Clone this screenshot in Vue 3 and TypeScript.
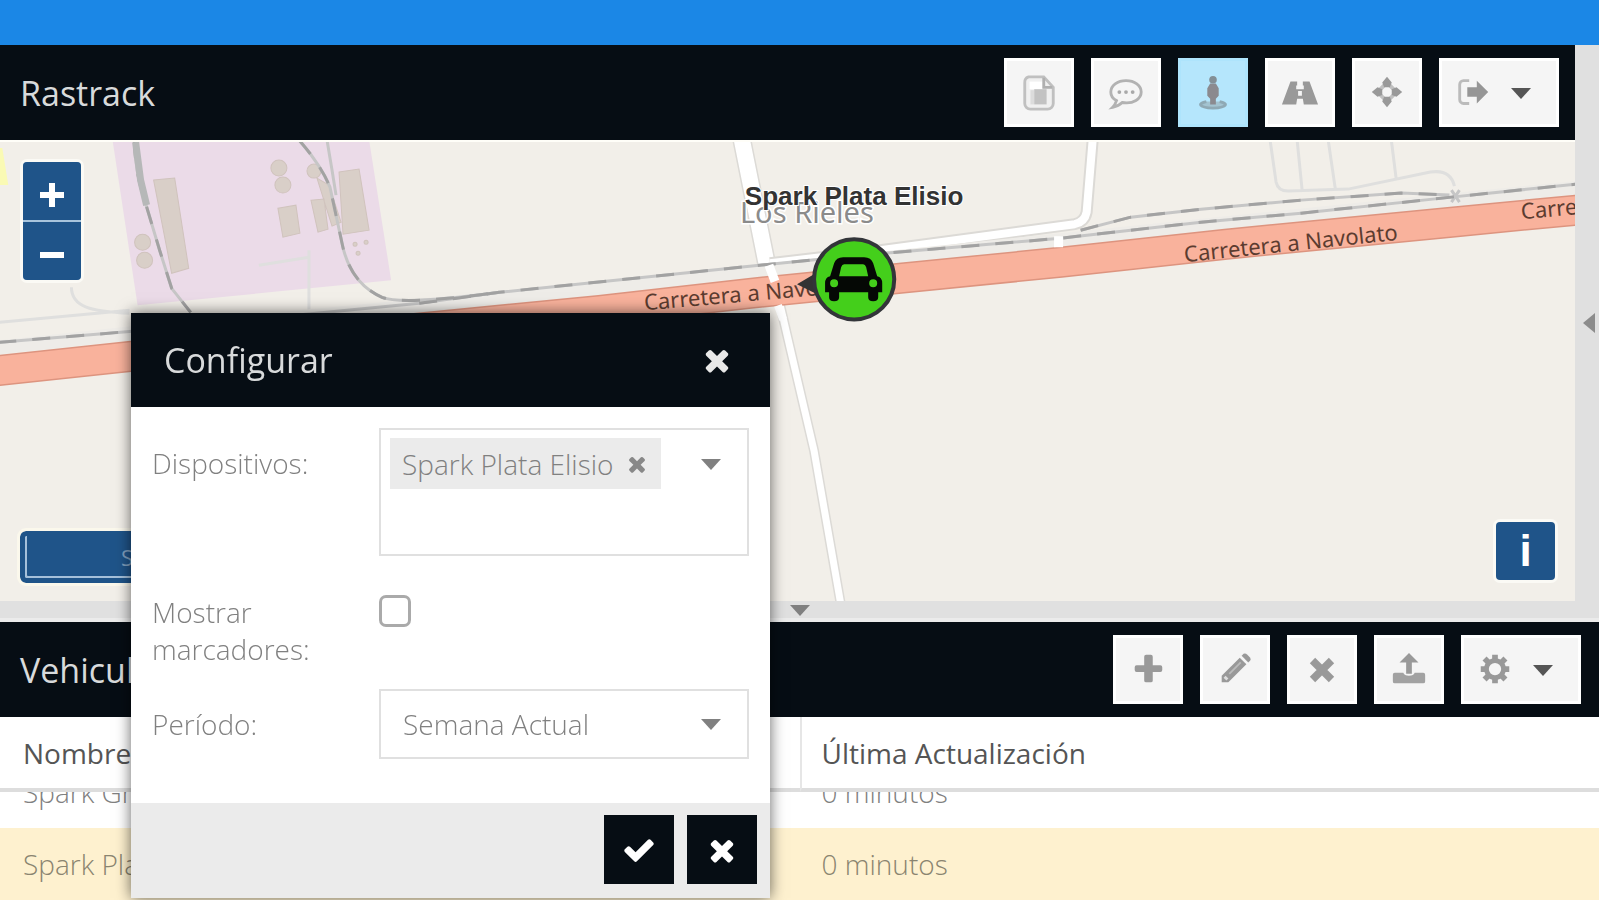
<script setup lang="ts">
import { onMounted, ref } from 'vue'

interface Tool {
  icon: string
  label: string
  active?: boolean
  menu?: boolean
}

const mapTools: Tool[] = [
  { icon: 'report', label: 'Reportes' },
  { icon: 'comment', label: 'Mensajes' },
  { icon: 'street', label: 'Seguir', active: true },
  { icon: 'road', label: 'Ruta' },
  { icon: 'center', label: 'Centrar' },
  { icon: 'exit', label: 'Salir', menu: true },
]

const vehicleTools: Tool[] = [
  { icon: 'plus', label: 'Agregar' },
  { icon: 'pencil', label: 'Editar' },
  { icon: 'cross', label: 'Eliminar' },
  { icon: 'upload', label: 'Enviar' },
  { icon: 'cog', label: 'Opciones', menu: true },
]

const vehicles = [
  { name: 'Spark Gris', updated: '0 minutos', selected: false },
  { name: 'Spark Plata Elisio', updated: '0 minutos', selected: true },
]

const period = ref('Semana Actual')
const showMarkers = ref(false)
const search = ref('')
const grid = ref<HTMLElement | null>(null)

onMounted(() => {
  if (grid.value) grid.value.scrollTop = 36
})
</script>

<template>
  <svg class="defs" aria-hidden="true">
    <symbol id="i-report" viewBox="0 0 40 40">
      <path d="M9 3h16l10 11v17a6 6 0 0 1-6 6H11a6 6 0 0 1-6-6V9a6 6 0 0 1 4-6z" fill="#f0f0f0" stroke="#c0c0c0" stroke-width="3" />
      <path d="M10 8h14v8H10z" fill="#fff" />
      <path d="M25 4v10h9" fill="none" stroke="#b0b0b0" stroke-width="3" />
      <path d="M11 17h4v15h-4z" fill="#dcdcdc" />
      <path d="M15 16h13v16H15z" fill="#c2c2c2" />
    </symbol>
    <symbol id="i-comment" viewBox="0 0 40 40">
      <path d="M20 7c-9 0-16 5-16 12 0 4 2 7 6 9-1 3-2 5-4 7 5-1 8-3 10-5 12 2 20-4 20-11 0-7-7-12-16-12z" fill="none" stroke="#b2b2b2" stroke-width="3" />
      <g fill="#a9a9a9"><circle cx="13" cy="19" r="2" /><circle cx="20" cy="19" r="2" /><circle cx="27" cy="19" r="2" /></g>
    </symbol>
    <symbol id="i-street" viewBox="0 0 40 40">
      <path d="M13 29c-9 2-9 6 7 7 16-1 16-5 7-7" fill="#a3c3d0" stroke="#8fa9b4" stroke-width="3" />
      <circle cx="20" cy="6" r="4" fill="#838f96" />
      <path d="M17 10h6l3 5v8l-3 3v6h-6v-6l-3-3v-8z" fill="#8b8a8f" />
    </symbol>
    <symbol id="i-road" viewBox="0 0 40 40">
      <path d="M10 8h7v4h-1v4h8v-4h-1V8h7l9 24H24l-1-6h-6l-1 6H1z" fill="#999" />
      <path d="M18 8h4v5h-4zM18 18h4v5h-4z" fill="#f5f5f5" />
    </symbol>
    <symbol id="i-center" viewBox="0 0 40 40">
      <path d="M20 9L30 19 20 29 10 19z" fill="none" stroke="#c0c0c0" stroke-width="4" />
      <path d="M20 3l5 6-2 5h-6l-2-5zM20 35l5-6-2-5h-6l-2 5zM4 19l6-5 5 2v6l-5 2zM36 19l-6-5-5 2v6l5 2z" fill="#999" />
    </symbol>
    <symbol id="i-exit" viewBox="0 0 40 40">
      <path d="M16 7h-6a4 4 0 0 0-4 4v16a4 4 0 0 0 4 4h6" fill="none" stroke="#bbb" stroke-width="3" />
      <path d="M14 14h10V7l12 12-12 12v-7H14z" fill="#969696" />
    </symbol>
    <symbol id="i-plus" viewBox="0 0 40 40">
      <path d="M18 4h5q2 0 2 2v9h8q2 0 2 2v3q0 2-2 2h-8v9q0 2-2 2h-5q-2 0-2-2v-9H8q-2 0-2-2v-3q0-2 2-2h8V6q0-2 2-2z" fill="#999" />
    </symbol>
    <symbol id="i-pencil" viewBox="0 0 40 40">
      <path d="M6 26L25 7l7 7-19 19H6z" fill="#999" />
      <path d="M27 5l2-2q2-1 4 1l3 3q1 2 0 3l-2 2z" fill="#999" />
      <path d="M9 27l3 3" stroke="#ddd" stroke-width="3" />
      <path d="M14 24L26 12" stroke="#bbb" stroke-width="2" />
    </symbol>
    <symbol id="i-cross" viewBox="0 0 40 40">
      <path d="M10 10l20 20M30 10L10 30" stroke="#999" stroke-width="8" />
    </symbol>
    <symbol id="i-times" viewBox="0 0 1792 1792">
      <path d="M1490 1322q0 40-28 68l-136 136q-28 28-68 28t-68-28l-294-294-294 294q-28 28-68 28t-68-28l-136-136q-28-28-28-68t28-68l294-294-294-294q-28-28-28-68t28-68l136-136q28-28 68-28t68 28l294 294 294-294q28-28 68-28t68 28l136 136q28 28 28 68t-28 68l-294 294 294 294q28 28 28 68z" fill="currentColor" />
    </symbol>
    <symbol id="i-check" viewBox="0 0 1792 1792">
      <path d="M1671 566q0 40-28 68l-724 724-136 136q-28 28-68 28t-68-28l-136-136-362-362q-28-28-28-68t28-68l136-136q28-28 68-28t68 28l294 295 656-657q28-28 68-28t68 28l136 136q28 28 28 68z" fill="currentColor" />
    </symbol>
    <symbol id="i-upload" viewBox="0 0 40 40">
      <path d="M20 2l10 10h-7v12h-6V12h-7z" fill="#999" />
      <path d="M5 23h9q1 3 6 3t6-3h9q2 0 2 2v7q0 2-2 2H5q-2 0-2-2v-7q0-2 2-2z" fill="#a2a2a2" />
    </symbol>
    <symbol id="i-cog" viewBox="0 0 40 40">
      <path d="M20 4v30M5 19h30M9 8l22 22M31 8L9 30" stroke="#999" stroke-width="6" />
      <circle cx="20" cy="19" r="9" fill="#f5f5f5" stroke="#999" stroke-width="5" />
    </symbol>
    <symbol id="i-caret" viewBox="0 0 20 12">
      <path d="M0 1h20L10 12z" fill="currentColor" />
    </symbol>
  </svg>

  <div class="app">
    <div class="topbar"></div>
    <div class="upper">
      <section class="map-panel">
        <header class="panel-head">
          <h1>Rastrack</h1>
          <div class="tools">
            <button v-for="t in mapTools" :key="t.icon" type="button" class="tool" :class="{ active: t.active, menu: t.menu }" :aria-label="t.label">
              <svg class="icon"><use :href="'#i-' + t.icon" /></svg>
              <svg v-if="t.menu" class="caret"><use href="#i-caret" /></svg>
            </button>
          </div>
        </header>
        <div class="map">
          <svg class="canvas" viewBox="0 142 1575 458" preserveAspectRatio="xMidYMid slice">
            <path d="M114 140H370L392 280 139 305z" fill="#ebdbe8" />
            <path d="M0 148h4l6 37H0z" fill="#fafab4" />
            <g fill="#d9cfc8" stroke="#d0c3bd">
              <path d="M155 180l21-2 14 90-17 5zM279 208l18-3 4 28-17 4zM312 200l13-1 4 30-10 3zM318 178l12 7 12 37-9 4zM340 172l20-3 10 61-26 4z" />
              <circle cx="144" cy="242" r="8" /><circle cx="146" cy="260" r="8" />
              <circle cx="280" cy="168" r="8" /><circle cx="284" cy="185" r="8" />
              <circle cx="315" cy="171" r="7" />
              <circle cx="356" cy="244" r="2" /><circle cx="367" cy="242" r="2" /><circle cx="359" cy="253" r="2" />
            </g>
            <g fill="none" stroke="#dfdfde" stroke-width="3">
              <path d="M73 287c0 20 20 24 58 26M260 265l50-8M310 250v65M0 322l131-12" />
              <path d="M1269 140l6 42q2 9 12 9l60-2 82-17q20-3 24 14M1296 140l5 50M1327 140l7 48M1390 140l5 40" />
            </g>

            <g fill="none" stroke="#fff">
              <path d="M742 140l26 130" stroke="#dcdad6" stroke-width="19" />
              <path d="M742 140l26 130 4 30" stroke-width="16" />
              <path d="M779 300l35 150 27 155" stroke="#dcdad6" stroke-width="10" />
              <path d="M779 300l35 150 27 155" stroke-width="7" />
              <path d="M1092 140l-6 72q-2 10-12 12L880 250 770 263" stroke="#dcdad6" stroke-width="12" />
              <path d="M1092 140l-6 72q-2 10-12 12L880 250 770 263" stroke-width="8" />
            </g>
            <path d="M0 347L131 333 500 298 750 272 1060 240 1450 200 1575 188" fill="none" stroke="#eeece8" stroke-width="14" />
            <g fill="none" stroke="#c6c6c6" stroke-width="3">
              <path d="M0 342L131 331 420 303 500 292 740 267 850 256 1060 238 1200 222 1300 213 1450 197 1575 184" />
              <path d="M1080 230l50-13 70-8 100-9 100-7 48 2" />
              <path d="M136 140q0 30 10 60l15 50 12 38 19 24" />
              <path d="M300 140q22 25 31 47l12 56q8 40 40 54 20 8 117-5" />
              <path d="M328 140l5 30 4 25" />
              <path d="M1450 190l8 12M1458 190l-8 12" />
            </g>
            <g fill="none" stroke="#a2a2a2" stroke-width="3" stroke-dasharray="18 16">
              <path d="M0 342L131 331M420 303l80-11 240-25 110-11 210-18 140-16 100-9 150-16 125-13" />
              <path d="M1080 230l50-13 70-8 100-9 100-7 48 2" />
              <path d="M136 140q0 30 10 60l15 50 12 38 19 24" />
              <path d="M300 140q22 25 31 47l12 56q8 40 40 54 20 8 117-5" />
            </g>
            <path d="M137 142l5 38 6 25" fill="none" stroke="#b6b8b8" stroke-width="7" />

            <path d="M0 370L131 356 600 310 750 293 900 278 1060 262 1225 244 1450 222 1575 210" fill="none" stroke="#dd947f" stroke-width="31" />
            <path d="M0 370L131 356 600 310 750 293 900 278 1060 262 1225 244 1450 222 1575 210" fill="none" stroke="#f9b29c" stroke-width="28" />
            <path d="M769 265l6 16M1058 236v11" fill="none" stroke="#fff" stroke-width="9" />
            <path d="M778 305l5 14" fill="none" stroke="#fff" stroke-width="8" />

            <g class="road-name">
              <text transform="translate(645 310) rotate(-5)">Carretera a Navolato</text>
              <text transform="translate(1184 262) rotate(-6)">Carretera a Navolato</text>
              <text transform="translate(1520 219) rotate(-5)">Carretera</text>
            </g>
            <text class="place" x="740" y="223">Los Rieles</text>
            <text class="vehicle" x="854" y="205" text-anchor="middle">Spark Plata Elisio</text>

            <path d="M797 284l22-13v24z" fill="#333" />
            <circle cx="854" cy="279" r="40" fill="#44cf1b" stroke="#333539" stroke-width="4" />
            <path fill="#050805" fill-rule="evenodd" d="M843 257h21q7 0 9 6l4 13q5 1 5 7v9h-4v5q0 4-5 4t-5-4v-5h-29v5q0 4-5 4t-5-4v-5h-4v-9q0-6 5-7l4-13q2-6 9-6zm1 7q-2 0-3 3l-2 9h29l-2-9q-1-3-3-3zm-10 15a4 4 0 1 0 0 8 4 4 0 0 0 0-8zm39 0a4 4 0 1 0 0 8 4 4 0 0 0 0-8z" />
          </svg>
          <div class="zoom">
            <button type="button" aria-label="Acercar"><svg viewBox="0 0 24 24"><path d="M9 0h6v9h9v6h-9v9H9v-9H0V9h9z" /></svg></button>
            <button type="button" aria-label="Alejar"><svg viewBox="0 0 24 24"><path d="M0 9h24v6H0z" /></svg></button>
          </div>
          <button type="button" class="scale">S</button>
          <button type="button" class="info">i</button>
        </div>
      </section>
      <div class="side-split"><svg viewBox="0 0 12 20"><path d="M12 0v20L0 10z" /></svg></div>
    </div>

    <div class="split"><svg class="caret"><use href="#i-caret" /></svg></div>

    <section class="vehicles">
      <header class="panel-head wide">
        <h2>Vehiculos</h2>
        <div class="tools">
          <button v-for="t in vehicleTools" :key="t.icon" type="button" class="tool" :class="{ menu: t.menu }" :aria-label="t.label">
            <svg class="icon"><use :href="'#i-' + t.icon" /></svg>
            <svg v-if="t.menu" class="caret"><use href="#i-caret" /></svg>
          </button>
        </div>
      </header>
      <div ref="grid" class="grid">
        <table>
          <thead>
            <tr><th>Nombre</th><th>Última Actualización</th></tr>
          </thead>
          <tbody>
            <tr v-for="v in vehicles" :key="v.name" :class="{ selected: v.selected }">
              <td>{{ v.name }}</td>
              <td>{{ v.updated }}</td>
            </tr>
          </tbody>
        </table>
      </div>
    </section>

    <form class="dialog" role="dialog" aria-labelledby="dialog-title" @submit.prevent>
      <header class="dialog-head">
        <h2 id="dialog-title">Configurar</h2>
        <button type="button" class="close" aria-label="Cerrar"><svg><use href="#i-times" /></svg></button>
      </header>
      <div class="fields">
        <label for="devices">Dispositivos:</label>
        <div class="picker">
          <div class="picked">
            <span class="chip">Spark Plata Elisio
              <button type="button" aria-label="Quitar"><svg><use href="#i-times" /></svg></button>
            </span>
            <input id="devices" v-model="search" type="text" />
          </div>
          <svg class="caret"><use href="#i-caret" /></svg>
        </div>
        <label for="markers">Mostrar marcadores:</label>
        <input id="markers" v-model="showMarkers" type="checkbox" />
        <label for="period">Período:</label>
        <div class="select">
          <select id="period" v-model="period"><option>Semana Actual</option></select>
          <svg class="caret"><use href="#i-caret" /></svg>
        </div>
      </div>
      <footer>
        <button type="submit" aria-label="Aceptar"><svg><use href="#i-check" /></svg></button>
        <button type="button" aria-label="Cancelar"><svg><use href="#i-times" /></svg></button>
      </footer>
    </form>
  </div>
</template>

<style>
body {
  margin: 0;
}
</style>

<style scoped>
* {
  box-sizing: border-box;
}
button,
input,
select {
  margin: 0;
  padding: 0;
  border: 0;
  font: inherit;
}
h1,
h2 {
  margin: 0;
  font-size: 34px;
  font-weight: 400;
  line-height: 40px;
}
.defs {
  position: absolute;
  width: 0;
  height: 0;
}
.app {
  position: relative;
  display: flex;
  flex-direction: column;
  height: 100vh;
  overflow: hidden;
  background: #fff;
  color: #808080;
  font-family: "Open Sans", "Noto Sans", sans-serif;
  font-size: 28px;
}
.topbar {
  flex: none;
  height: 45px;
  background: #1b87e6;
}
.upper {
  display: flex;
  flex: 1;
  min-height: 0;
}
.map-panel {
  display: flex;
  flex: 1;
  flex-direction: column;
  min-width: 0;
}
.panel-head {
  display: flex;
  flex: none;
  align-items: center;
  justify-content: space-between;
  height: 95px;
  padding: 0 16px 0 20px;
  background: #060d14;
  color: #d8dadb;
}
.panel-head.wide {
  padding-right: 18px;
}
.tools {
  display: flex;
  gap: 17px;
}
.tool {
  display: flex;
  align-items: center;
  justify-content: center;
  width: 70px;
  height: 69px;
  border: 3px solid #fff;
  background: #f5f5f5;
  color: #999;
}
.tool.menu {
  justify-content: space-between;
  width: 120px;
  padding: 0 25px 0 12px;
}
.tool.active {
  border-color: #aee4fc;
  background: #b5e6fc;
}
.icon {
  flex: none;
  width: 38px;
  height: 38px;
}
.caret {
  flex: none;
  width: 20px;
  height: 12px;
  color: #808080;
}
.tool .caret {
  color: #555;
}
.map {
  position: relative;
  flex: 1;
  min-height: 0;
  border-top: 2px solid #fffef8;
  background: #f2efe9;
}
.canvas {
  display: block;
  position: absolute;
  width: 100%;
  height: 100%;
}
.road-name {
  fill: #5c3c30;
  font-family: "Noto Sans", sans-serif;
  font-size: 22px;
}
.place {
  fill: #8b8b8b;
  stroke: #fff;
  stroke-width: 3px;
  paint-order: stroke;
  font-family: "Noto Sans", sans-serif;
  font-size: 29px;
}
.vehicle {
  fill: #333;
  stroke: #fff;
  stroke-width: 2px;
  paint-order: stroke;
  font-family: "Liberation Sans", sans-serif;
  font-size: 26px;
  font-weight: 700;
}
.zoom {
  position: absolute;
  top: 20px;
  left: 23px;
  display: grid;
  gap: 2px;
  border-radius: 4px;
  background: #a8c4dc;
  box-shadow: 0 0 0 3px #fbfaf5;
  overflow: hidden;
}
.zoom button {
  display: grid;
  place-items: center;
  width: 58px;
  height: 58px;
  padding-top: 8px;
  background: #1f5489;
}
.zoom svg {
  width: 24px;
  height: 24px;
  fill: #fff;
}
.scale {
  position: absolute;
  bottom: 18px;
  left: 20px;
  width: 214px;
  height: 52px;
  border: 5px solid #1f5489;
  border-radius: 6px;
  outline: 3px solid #fbf8ec;
  background: #1f5489;
  box-shadow: inset 2px -2px 0 #a5c0da;
  color: #7f9fbe;
  font-size: 22px;
  line-height: 36px;
}
.info {
  position: absolute;
  right: 20px;
  bottom: 21px;
  width: 59px;
  height: 58px;
  border-radius: 4px;
  background: #1f5489;
  box-shadow: 0 0 0 3px #fbfaf5;
  color: #fff;
  font-family: "Liberation Sans", sans-serif;
  font-size: 44px;
  font-weight: 700;
  line-height: 58px;
}
.side-split {
  display: flex;
  flex: none;
  align-items: center;
  justify-content: flex-end;
  width: 24px;
  padding-right: 4px;
  background: #e0e0e0;
}
.side-split svg {
  width: 12px;
  height: 20px;
  fill: #8c8c8c;
}
.split {
  display: flex;
  flex: none;
  justify-content: center;
  height: 21px;
  padding-top: 3px;
  border-bottom: 4px solid #ebebeb;
  background: #e0e0e0;
}
.vehicles {
  flex: none;
}
.grid {
  height: 183px;
  overflow: hidden;
  background: #fef1cf;
}
table {
  width: 100%;
  border-collapse: separate;
  border-spacing: 0;
  table-layout: fixed;
}
th,
td {
  padding: 0 0 0 23px;
  overflow: hidden;
  text-align: left;
  white-space: nowrap;
}
th {
  position: sticky;
  top: 0;
  height: 75px;
  border-bottom: 4px solid #ddd;
  background: #fff;
  color: #555;
  font-weight: 400;
}
th + th {
  padding-left: 20px;
  border-left: 2px solid #e6e6e6;
}
td + td {
  padding-left: 22px;
}
td {
  height: 72px;
  background: #fff;
  font-weight: 300;
}
.selected td {
  background: #fef1cf;
  color: #8a8470;
}
.dialog {
  position: absolute;
  top: 313px;
  left: 131px;
  width: 639px;
  background: #fff;
  box-shadow: 0 0 14px rgba(0, 0, 0, 0.6);
}
.dialog-head {
  display: flex;
  align-items: center;
  justify-content: space-between;
  height: 94px;
  padding: 0 36px 0 33px;
  background: #060d14;
  color: #d8dadb;
}
.close {
  display: grid;
  place-items: center;
  background: none;
  color: #e8e8e8;
}
.close svg,
footer svg {
  width: 34px;
  height: 34px;
}
.fields {
  display: grid;
  grid-template-columns: 206px 1fr;
  row-gap: 21px;
  column-gap: 21px;
  align-items: start;
  padding: 21px 21px 44px;
}
label {
  padding-top: 17px;
  font-weight: 300;
  line-height: 37px;
}
.picker {
  display: flex;
  justify-content: space-between;
  height: 128px;
  padding: 8px 26px 0 9px;
  border: 2px solid #e0e0e0;
}
.picker .caret {
  margin-top: 20px;
}
.picked {
  flex: 1;
}
.picked input {
  display: block;
  width: 240px;
  height: 40px;
  outline: 0;
  background: none;
}
.chip {
  display: inline-flex;
  align-items: center;
  gap: 12px;
  height: 51px;
  padding: 0 12px;
  background: #ebebeb;
  font-weight: 300;
}
.chip button {
  display: grid;
  background: none;
  color: #888;
}
.chip svg {
  width: 24px;
  height: 24px;
}
#markers {
  appearance: none;
  width: 32px;
  height: 32px;
  margin-top: 18px;
  border: 3px solid #aaa;
  border-radius: 7px;
  background: #fff;
}
.select {
  display: grid;
  align-items: center;
}
.select > * {
  grid-area: 1 / 1;
}
.select .caret {
  justify-self: end;
  margin-right: 28px;
  pointer-events: none;
}
select {
  appearance: none;
  width: 100%;
  height: 70px;
  padding: 0 50px 0 22px;
  border: 2px solid #e0e0e0;
  border-radius: 0;
  background: #fff;
  color: #808080;
  font-weight: 300;
}
footer {
  display: flex;
  justify-content: flex-end;
  gap: 13px;
  padding: 12px 13px 14px;
  background: #ebebeb;
}
footer button {
  display: grid;
  place-items: center;
  width: 70px;
  height: 69px;
  background: #060d14;
  color: #fff;
}
</style>
